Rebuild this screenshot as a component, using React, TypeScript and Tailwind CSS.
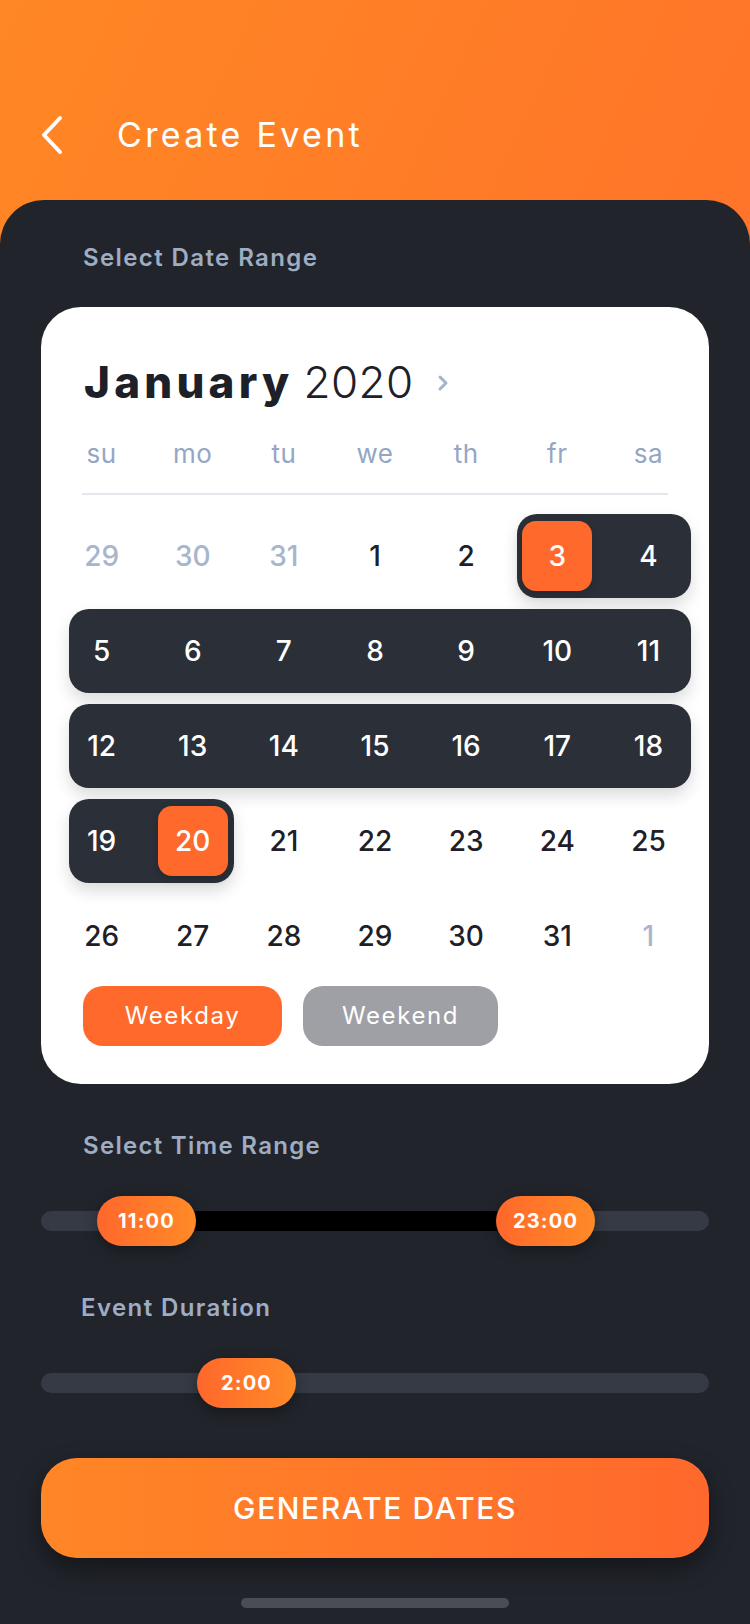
import React from "react";

type Day = { n: number; muted?: boolean; sel?: boolean };
type Row = { days: Day[]; pill?: string };

const COL_START = [
  "col-start-1",
  "col-start-2",
  "col-start-3",
  "col-start-4",
  "col-start-5",
  "col-start-6",
  "col-start-7",
];

const WEEKDAYS = ["su", "mo", "tu", "we", "th", "fr", "sa"];

const ROWS: Row[] = [
  {
    days: [
      { n: 29, muted: true },
      { n: 30, muted: true },
      { n: 31, muted: true },
      { n: 1 },
      { n: 2 },
      { n: 3, sel: true },
      { n: 4 },
    ],
    pill: "col-start-6 col-span-2 ml-[5px] mr-[3px]",
  },
  {
    days: [5, 6, 7, 8, 9, 10, 11].map((n) => ({ n })),
    pill: "col-start-1 col-span-7 ml-[13px] mr-[3px]",
  },
  {
    days: [12, 13, 14, 15, 16, 17, 18].map((n) => ({ n })),
    pill: "col-start-1 col-span-7 ml-[13px] mr-[3px]",
  },
  {
    days: [{ n: 19 }, { n: 20, sel: true }, { n: 21 }, { n: 22 }, { n: 23 }, { n: 24 }, { n: 25 }],
    pill: "col-start-1 col-span-2 ml-[13px] mr-[4px]",
  },
  {
    days: [{ n: 26 }, { n: 27 }, { n: 28 }, { n: 29 }, { n: 30 }, { n: 31 }, { n: 1, muted: true }],
  },
];

// which columns sit inside the dark range pill, per row
const IN_RANGE: number[][] = [[5, 6], [0, 1, 2, 3, 4, 5, 6], [0, 1, 2, 3, 4, 5, 6], [0, 1], []];

function DayCell({ day, col, inRange }: { day: Day; col: number; inRange: boolean }) {
  const color = day.sel || inRange ? "text-white" : day.muted ? "text-[#A7B6CD]" : "text-[#1E2029]";
  return (
    <div className={`${COL_START[col]} row-start-1 flex items-center justify-center`}>
      {day.sel ? (
        <div className="flex h-[70px] w-[70px] items-center justify-center rounded-[14px] bg-[#FF692C] shadow-[0_3px_8px_rgba(0,0,0,0.18)]">
          <span className="text-[28px] font-medium text-white">{day.n}</span>
        </div>
      ) : (
        <span className={`text-[28px] font-medium ${color}`}>{day.n}</span>
      )}
    </div>
  );
}

function Knob({ label, className }: { label: string; className: string }) {
  return (
    <div
      className={`absolute top-0 flex h-[50px] w-[99px] items-center justify-center rounded-full bg-gradient-to-r from-[#FF672C] to-[#FF8A27] shadow-[0_4px_14px_rgba(0,0,0,0.35)] ${className}`}
    >
      <span className="text-[20px] font-bold tracking-[1.2px] text-white">{label}</span>
    </div>
  );
}

export default function App() {
  return (
    <div className="flex h-[1624px] w-[750px] flex-col overflow-hidden bg-gradient-to-br from-[#FF8724] to-[#FF652C] font-['Inter',sans-serif]">
      {/* Header */}
      <div className="h-[200px] shrink-0 pt-[115px]">
        <div className="flex h-[40px] items-center">
          <svg width="24" height="40" viewBox="0 0 24 40" className="ml-[40px]">
            <path d="M20 3 L4 20 L20 37" fill="none" stroke="white" strokeWidth="4" strokeLinecap="round" strokeLinejoin="round" />
          </svg>
          <h1 className="ml-[53px] text-[34px] leading-[40px] tracking-[3.3px] text-white">Create Event</h1>
        </div>
      </div>

      {/* Dark panel */}
      <div className="flex flex-1 flex-col rounded-t-[44px] bg-[#21242B] px-[41px] pt-[42px]">
        <p className="ml-[42px] text-[24px] font-semibold leading-[32px] tracking-[1.4px] text-[#9EADC4]">Select Date Range</p>

        {/* Calendar card */}
        <div className="mt-[33px] rounded-[40px] bg-white px-[15px] pb-[38px] pt-[49px]">
          <div className="ml-[28px] flex h-[52px] items-center">
            <span className="text-[44px] font-extrabold leading-[52px] tracking-[4.2px] text-[#1E2029]">January</span>
            <span className="ml-[10px] text-[44px] font-light leading-[52px] tracking-[0.5px] text-[#1E2029]">2020</span>
            <svg width="14" height="18" viewBox="0 0 14 18" className="ml-[22px] mt-[2px]">
              <path d="M4 3 L10 9 L4 15" fill="none" stroke="#A3B3CB" strokeWidth="3" strokeLinecap="round" strokeLinejoin="round" />
            </svg>
          </div>

          <div className="mt-[31px] grid h-[30px] grid-cols-7">
            {WEEKDAYS.map((w) => (
              <span key={w} className="text-center text-[26px] leading-[30px] tracking-[0.5px] text-[#94A6C3]">
                {w}
              </span>
            ))}
          </div>

          <div className="mx-[26px] mt-[24px] h-[2px] bg-[#E3E8EF]" />

          <div className="mt-[19px] flex flex-col gap-[11px]">
            {ROWS.map((row, r) => (
              <div key={r} className="grid h-[84px] grid-cols-7">
                {row.pill && (
                  <div className={`row-start-1 rounded-[20px] bg-[#2B2F38] shadow-[0_8px_16px_rgba(0,0,0,0.14)] ${row.pill}`} />
                )}
                {row.days.map((d, c) => (
                  <DayCell key={c} day={d} col={c} inRange={IN_RANGE[r].includes(c)} />
                ))}
              </div>
            ))}
          </div>

          <div className="ml-[27px] mt-[8px] flex gap-[21px]">
            <button className="h-[60px] w-[199px] rounded-[20px] bg-[#FF692C] text-[24px] tracking-[1.6px] text-white">
              Weekday
            </button>
            <button className="h-[60px] w-[195px] rounded-[20px] bg-[#9EA0A5] text-[24px] tracking-[1.6px] text-white">
              Weekend
            </button>
          </div>
        </div>

        {/* Time range */}
        <p className="ml-[42px] mt-[46px] text-[24px] font-semibold leading-[32px] tracking-[1.3px] text-[#9EADC4]">Select Time Range</p>
        <div className="relative mt-[34px] flex h-[50px] items-center">
          <div className="h-[20px] w-full rounded-full bg-[#363A44]" />
          <div className="absolute left-[105px] top-[15px] h-[20px] w-[400px] bg-black" />
          <Knob label="11:00" className="left-[56px]" />
          <Knob label="23:00" className="left-[455px]" />
        </div>

        {/* Duration */}
        <p className="ml-[40px] mt-[46px] text-[24px] font-semibold leading-[32px] tracking-[1.4px] text-[#9EADC4]">Event Duration</p>
        <div className="relative mt-[34px] flex h-[50px] items-center">
          <div className="h-[20px] w-full rounded-full bg-[#363A44]" />
          <Knob label="2:00" className="left-[156px]" />
        </div>

        <button className="mt-[50px] h-[100px] w-full shrink-0 rounded-[36px] bg-gradient-to-r from-[#FF8626] to-[#FF682C] text-[30px] font-medium tracking-[1.6px] text-white shadow-[0_10px_24px_rgba(0,0,0,0.4)]">
          GENERATE DATES
        </button>

        <div className="mx-auto mt-[40px] h-[10px] w-[268px] rounded-full bg-[#4A4D54]" />
      </div>
    </div>
  );
}
